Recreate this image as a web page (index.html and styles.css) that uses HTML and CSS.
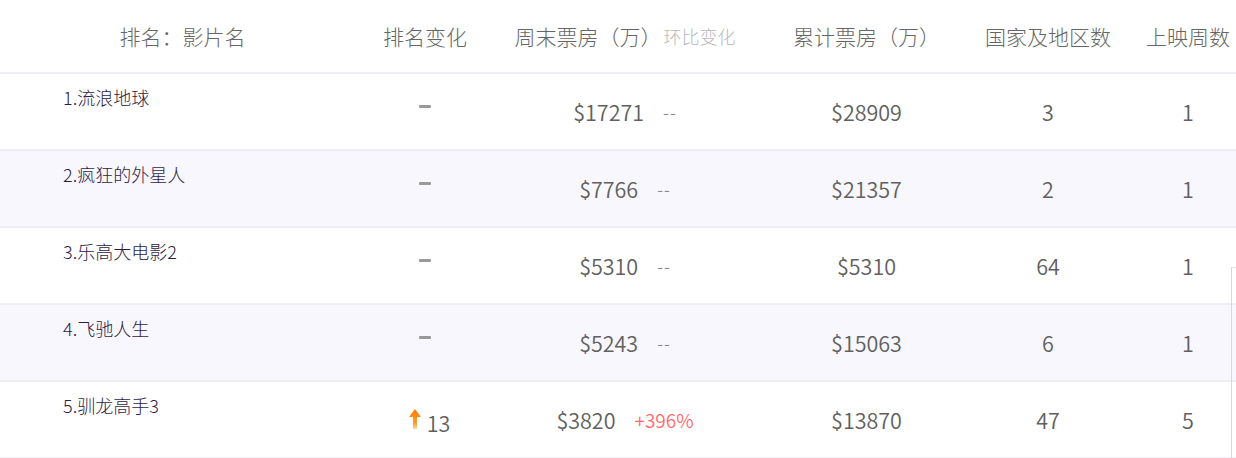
FILE: index.html
```html
<!DOCTYPE html>
<html lang="zh-CN">
<head>
<meta charset="utf-8">
<title>票房排行</title>
<link rel="stylesheet" href="styles.css">
</head>
<body>
<div class="table">
  <div class="row head">
    <div class="c name-h">排名：影片名</div>
    <div class="c">排名变化</div>
    <div class="c">周末票房（万）<span class="sub">环比变化</span></div>
    <div class="c">累计票房（万）</div>
    <div class="c">国家及地区数</div>
    <div class="c">上映周数</div>
  </div>

  <div class="row">
    <div class="c name">1.流浪地球</div>
    <div class="c"><span class="dash"></span></div>
    <div class="c weekly"><span>$17271</span><span class="chg">--</span></div>
    <div class="c">$28909</div>
    <div class="c">3</div>
    <div class="c">1</div>
  </div>

  <div class="row alt">
    <div class="c name">2.疯狂的外星人</div>
    <div class="c"><span class="dash"></span></div>
    <div class="c weekly"><span>$7766</span><span class="chg">--</span></div>
    <div class="c">$21357</div>
    <div class="c">2</div>
    <div class="c">1</div>
  </div>

  <div class="row">
    <div class="c name">3.乐高大电影2</div>
    <div class="c"><span class="dash"></span></div>
    <div class="c weekly"><span>$5310</span><span class="chg">--</span></div>
    <div class="c">$5310</div>
    <div class="c">64</div>
    <div class="c">1</div>
  </div>

  <div class="row alt">
    <div class="c name">4.飞驰人生</div>
    <div class="c"><span class="dash"></span></div>
    <div class="c weekly"><span>$5243</span><span class="chg">--</span></div>
    <div class="c">$15063</div>
    <div class="c">6</div>
    <div class="c">1</div>
  </div>

  <div class="row">
    <div class="c name">5.驯龙高手3</div>
    <div class="c up">
      <svg class="arrow" width="14" height="22" viewBox="0 0 14 22">
        <defs>
          <linearGradient id="g" x1="0" y1="0" x2="0" y2="1">
            <stop offset="0" stop-color="#ff7a00"/>
            <stop offset="0.7" stop-color="#ff9a2e"/>
            <stop offset="1" stop-color="#ffd9a8"/>
          </linearGradient>
        </defs>
        <path d="M7 1 L13 9 L9 9 L9 21 L5 21 L5 9 L1 9 Z" fill="url(#g)"/>
      </svg>
      <span>13</span>
    </div>
    <div class="c weekly"><span>$3820</span><span class="chg red">+396%</span></div>
    <div class="c">$13870</div>
    <div class="c">47</div>
    <div class="c">5</div>
  </div>
</div>
<div class="edge"></div>
</body>
</html>
```

FILE: styles.css
```css
html, body {
  margin: 0;
  padding: 0;
  background: #ffffff;
  overflow: hidden;
}
body {
  width: 1236px;
  height: 458px;
  position: relative;
  font-family: "Noto Sans CJK SC", "Noto Sans", sans-serif;
  font-weight: 300;
  color: #666666;
}
.table {
  width: 1248px;
}
.row {
  display: grid;
  grid-template-columns: 365px 120px 280px 203px 160px 120px;
  height: 75px;
  border-bottom: 2px solid #efedf8;
}
.row.head {
  height: 72px;
}
.row.alt {
  background: #f9f7fe;
}
.c {
  display: flex;
  align-items: center;
  justify-content: center;
  font-size: 21.5px;
  font-weight: 350;
  color: #606060;
  white-space: nowrap;
}
.head .c {
  font-size: 21px;
  font-weight: 300;
  color: #666666;
}
.head .sub {
  font-size: 18px;
  color: #b8b8b8;
  margin-left: 2px;
}
.name {
  justify-content: flex-start;
  align-items: flex-start;
  padding-left: 63px;
  padding-top: 10px;
  font-size: 18px;
  font-weight: 300;
  color: #2e1c45;
}
.dash {
  display: block;
  width: 12px;
  height: 3px;
  background: #999999;
  border-radius: 1px;
  margin-top: -10px;
}
.weekly {
  gap: 19px;
}
.chg {
  font-size: 17px;
  letter-spacing: 1px;
  color: #888888;
}
.chg.red {
  color: #ff6b6b;
  font-size: 19px;
  letter-spacing: 0;
}
.up {
  gap: 5px;
  padding-top: 6px;
  padding-left: 8px;
}
.arrow {
  margin-top: -8px;
}
.edge {
  position: absolute;
  left: 1231px;
  top: 267px;
  width: 10px;
  height: 200px;
  border-left: 1px solid #d8d8d8;
  border-top: 1px solid #e4e4e4;
}
```
